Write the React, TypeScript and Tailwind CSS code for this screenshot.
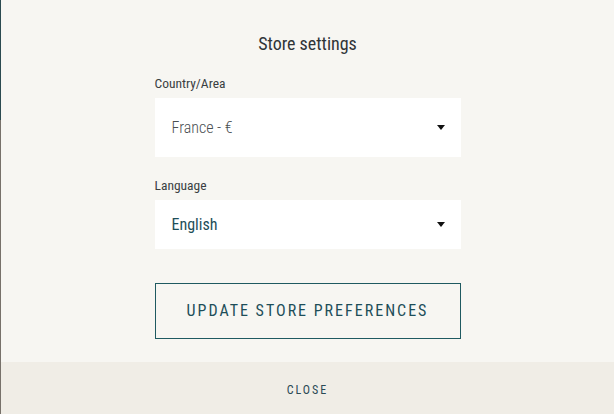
const FONT = "font-['Roboto_Condensed',Roboto,'Liberation_Sans',sans-serif] [font-stretch:75%]";

function Caret() {
  return (
    <svg width="8" height="5" viewBox="0 0 8 5" className="shrink-0">
      <path d="M0 0 H8 L4 5 Z" fill="#111" />
    </svg>
  );
}

export default function App() {
  return (
    <div className={`flex h-[414px] w-[614px] ${FONT}`}>
      {/* backdrop peeking at left edge */}
      <div className="flex w-px flex-col">
        <div className="h-[120px] bg-[#2b4a50]" />
        <div className="flex-1 bg-[#77716a]" />
      </div>

      <div className="flex flex-1 flex-col">
        <main className="flex flex-1 flex-col bg-[#f7f6f2] pt-8">
          <div className="mx-auto flex w-[306px] flex-col">
            <h2 className="text-center text-[18px] leading-6 text-[#2f3437]">Store settings</h2>

            <label className="mt-[19px] text-[13.5px] leading-4 text-[#3a3f42]">Country/Area</label>
            <div className="mt-[7px] flex h-[59px] items-center justify-between bg-white pl-[17px] pr-[16px]">
              <span className="text-[16px] font-light text-[#4a4f52]">France - €</span>
              <Caret />
            </div>

            <label className="mt-5 text-[13.5px] leading-4 text-[#3a3f42]">Language</label>
            <div className="mt-[7px] flex h-[49px] items-center justify-between bg-white pl-[17px] pr-[16px]">
              <span className="text-[16px] text-[#1d4e59]">English</span>
              <Caret />
            </div>

            <button className="mt-[34px] h-[56px] w-full border border-[#1f5a61] text-[16px] tracking-[2px] text-[#1d4e59]">
              UPDATE STORE PREFERENCES
            </button>
          </div>
        </main>

        <footer className="flex h-[52px] items-center justify-center bg-[#f0ede6] pt-1">
          <button className="text-[12px] tracking-[2px] text-[#2b4a55]">CLOSE</button>
        </footer>
      </div>
    </div>
  );
}
